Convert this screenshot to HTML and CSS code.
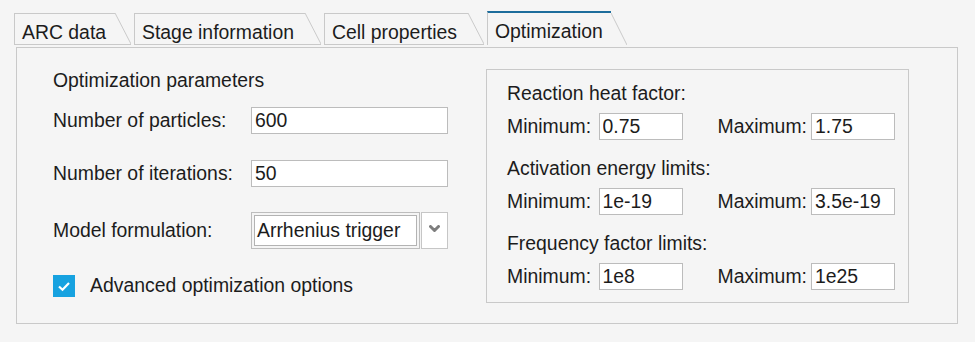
FILE: index.html
```html
<!DOCTYPE html>
<html lang="en">
<head>
    <meta charset="UTF-8">
    <title>Optimization</title>
    <link rel="stylesheet" href="styles.css">
</head>
<body>
<div class="tabs">
    <div class="tab tabArc"><span class="tabLabel">ARC data</span></div>
    <div class="tab tabStage"><span class="tabLabel">Stage information</span></div>
    <div class="tab tabCell"><span class="tabLabel">Cell properties</span></div>
    <div class="tab tabOpt selected"><span class="tabLabel">Optimization</span></div>
</div>
<div class="panel">
    <div class="params">
        <div class="paramsTitle">Optimization parameters</div>
        <div class="field fieldParticles">
            <label class="fieldLabel" for="particles">Number of particles:</label>
            <input class="textBox wide" id="particles" type="text" value="600">
        </div>
        <div class="field fieldIterations">
            <label class="fieldLabel" for="iterations">Number of iterations:</label>
            <input class="textBox wide" id="iterations" type="text" value="50">
        </div>
        <div class="field fieldModel">
            <span class="fieldLabel">Model formulation:</span>
            <div class="combo">
                <div class="comboText">Arrhenius trigger</div>
            </div>
            <div class="comboButton">
                <svg width="11" height="8" viewBox="0 0 11 8">
                    <path d="M1.5 1.5 L5.5 5.5 L9.5 1.5" fill="none" stroke="#7e7e7e" stroke-width="3" stroke-linejoin="round" stroke-linecap="round"/>
                </svg>
            </div>
        </div>
        <div class="checkRow">
            <span class="checkBox">
                <svg width="22" height="22" viewBox="0 0 22 22">
                    <path d="M6 11.5 L9.5 14.8 L16 8" fill="none" stroke="#ffffff" stroke-width="2.2"/>
                </svg>
            </span>
            <span class="checkLabel">Advanced optimization options</span>
        </div>
    </div>
    <div class="limits">
        <div class="limitTitle">Reaction heat factor:</div>
        <div class="limitRow">
            <span class="minLabel">Minimum:</span>
            <input class="textBox small" type="text" value="0.75">
            <span class="maxLabel">Maximum:</span>
            <input class="textBox small" type="text" value="1.75">
        </div>
        <div class="limitTitle">Activation energy limits:</div>
        <div class="limitRow">
            <span class="minLabel">Minimum:</span>
            <input class="textBox small" type="text" value="1e-19">
            <span class="maxLabel">Maximum:</span>
            <input class="textBox small" type="text" value="3.5e-19">
        </div>
        <div class="limitTitle">Frequency factor limits:</div>
        <div class="limitRow">
            <span class="minLabel">Minimum:</span>
            <input class="textBox small" type="text" value="1e8">
            <span class="maxLabel">Maximum:</span>
            <input class="textBox small" type="text" value="1e25">
        </div>
    </div>
</div>
</body>
</html>
```

FILE: styles.css
```css
:root {
    --font-primary: 19.4px;
    --line: #c9c9c9;
    --text: #1c1c1c;
}

body {
    margin: 0;
    background-color: #f5f5f5;
    color: var(--text);
    font-family: "Liberation Sans", Arial, sans-serif;
    font-size: var(--font-primary);
}

.tabs {
    display: flex;
    align-items: flex-end;
    gap: 3px;
    height: 45px;
    padding-left: 14px;
    box-sizing: border-box;
}

.tab {
    display: flex;
    height: 32px;
}

.tab::after {
    content: "";
    width: 16px;
    border-bottom: 1px solid var(--line);
    background: linear-gradient(to top right, transparent calc(50% - 0.9px), #cacaca 50%, transparent calc(50% + 0.9px));
}

.tabLabel {
    box-sizing: border-box;
    border-left: 1px solid var(--line);
    border-top: 1px solid var(--line);
    border-bottom: 1px solid var(--line);
    padding: 7px 0 0 7px;
    font-size: 19.4px;
    white-space: nowrap;
}

.tabArc .tabLabel {
    width: 101px;
}

.tabStage .tabLabel {
    width: 171px;
}

.tabCell .tabLabel {
    width: 144px;
}

.tabOpt .tabLabel {
    width: 124px;
}

.tab.selected {
    height: 34px;
}

.tab.selected .tabLabel {
    border-top: 2px solid #1d6d9c;
    border-bottom: none;
    padding-top: 7px;
}

.tab.selected::after {
    border-bottom: none;
    background: linear-gradient(to top right, transparent calc(50% - 0.9px), #cacaca 50%, transparent calc(50% + 0.9px)) 0 2px / 100% calc(100% - 2px) no-repeat;
}

.panel {
    display: flex;
    justify-content: space-between;
    box-sizing: border-box;
    width: 942px;
    height: 277px;
    margin: 2px 0 0 16px;
    border: 1px solid var(--line);
}

.params {
    padding: 21px 0 0 36px;
}

.paramsTitle {
    line-height: 22px;
}

.field {
    display: flex;
    align-items: center;
}

.fieldParticles {
    margin-top: 16px;
}

.fieldIterations {
    margin-top: 26px;
}

.fieldModel {
    margin-top: 25px;
}

.fieldLabel {
    width: 198px;
    white-space: nowrap;
}

.textBox {
    box-sizing: border-box;
    height: 27px;
    margin: 0;
    padding: 0 3px;
    border: 1px solid #bcbcbc;
    background: #ffffff;
    color: var(--text);
    font-family: "Liberation Sans", Arial, sans-serif;
    font-size: var(--font-primary);
    outline: none;
}

.textBox.wide {
    width: 197px;
}

.combo {
    box-sizing: border-box;
    width: 169px;
    height: 37px;
    padding: 2px;
    border: 1px solid #bdbdbd;
}

.comboText {
    box-sizing: border-box;
    height: 31px;
    padding: 3px 0 0 2px;
    border: 1px solid #b3b3b3;
    background: #ffffff;
    white-space: nowrap;
}

.comboButton {
    display: flex;
    align-items: center;
    justify-content: center;
    box-sizing: border-box;
    width: 27px;
    height: 37px;
    margin-left: 1px;
    padding-bottom: 3px;
    border: 1px solid #c6c6c6;
    background: #ffffff;
}

.checkRow {
    display: flex;
    align-items: center;
    margin-top: 25px;
}

.checkBox {
    display: flex;
    width: 22px;
    height: 22px;
    background-color: #17a2e0;
}

.checkLabel {
    margin-left: 15px;
}

.limits {
    box-sizing: border-box;
    width: 423px;
    height: 234px;
    margin: 21px 48px 0 0;
    padding: 12px 13px 0 20px;
    border: 1px solid var(--line);
}

.limitTitle {
    line-height: 22px;
    margin-top: 17px;
}

.limitTitle:first-child {
    margin-top: 0;
}

.limitRow {
    display: flex;
    align-items: center;
    margin-top: 9px;
}

.minLabel {
    width: 92px;
}

.maxLabel {
    width: 94px;
    margin-left: 35px;
}

.textBox.small {
    width: 84px;
}
```
